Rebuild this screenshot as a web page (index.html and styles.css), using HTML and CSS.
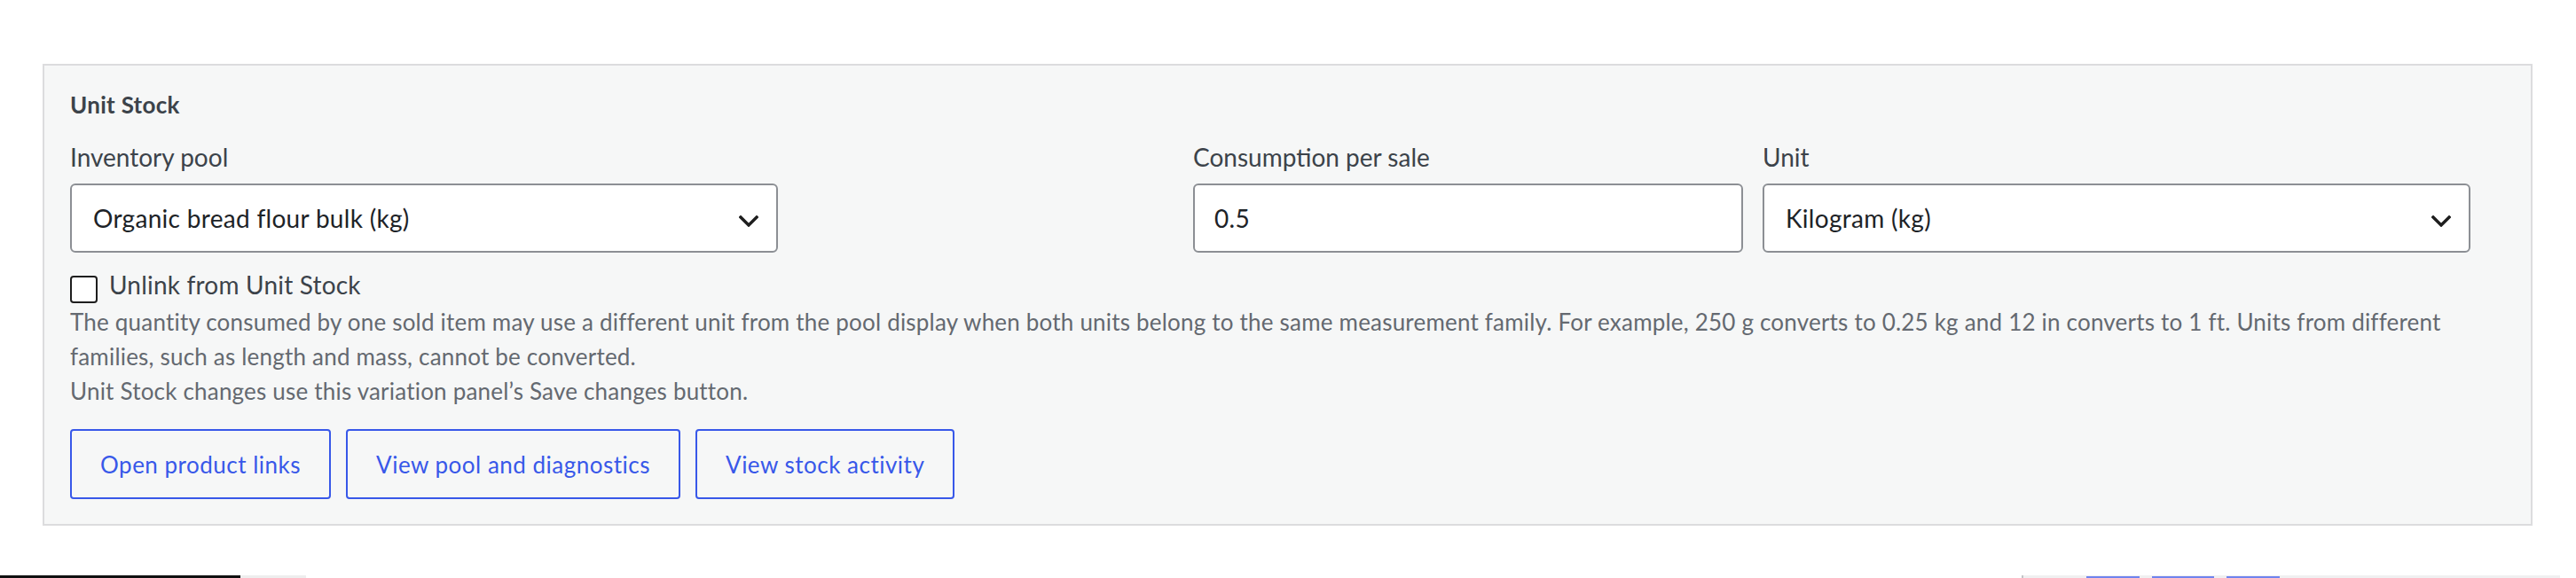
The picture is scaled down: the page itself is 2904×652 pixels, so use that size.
FILE: index.html
```html
<!DOCTYPE html>
<html lang="en">
<head>
<meta charset="utf-8">
<title>Unit Stock</title>
<link rel="stylesheet" href="styles.css">
</head>
<body>
<div class="page">
  <section class="panel">
    <h3 class="panel-title">Unit Stock</h3>
    <div class="fields">
      <div class="field field-pool">
        <label class="field-label" for="pool">Inventory pool</label>
        <div class="select-wrap">
          <select id="pool" class="control select">
            <option>Organic bread flour bulk (kg)</option>
          </select>
          <svg class="chevron" width="22" height="13" viewBox="0 0 22 13" aria-hidden="true"><path d="M2 2 L11 11 L20 2" fill="none" stroke="#1e1e1e" stroke-width="3.4" stroke-linecap="square"/></svg>
        </div>
      </div>
      <div class="field field-qty">
        <label class="field-label" for="qty">Consumption per sale</label>
        <input id="qty" class="control input" type="text" value="0.5">
      </div>
      <div class="field field-unit">
        <label class="field-label" for="unit">Unit</label>
        <div class="select-wrap">
          <select id="unit" class="control select">
            <option>Kilogram (kg)</option>
          </select>
          <svg class="chevron" width="22" height="13" viewBox="0 0 22 13" aria-hidden="true"><path d="M2 2 L11 11 L20 2" fill="none" stroke="#1e1e1e" stroke-width="3.4" stroke-linecap="square"/></svg>
        </div>
      </div>
    </div>
    <label class="check-row">
      <input type="checkbox" class="check">
      <span class="check-label">Unlink from Unit Stock</span>
    </label>
    <p class="desc">The quantity consumed by one sold item may use a different unit from the pool display when both units belong to the same measurement family. For example, 250 g converts to 0.25 kg and 12 in converts to 1 ft. Units from different families, such as length and mass, cannot be converted.</p>
    <p class="desc">Unit Stock changes use this variation panel’s Save changes button.</p>
    <div class="actions">
      <button class="btn" type="button">Open product links</button>
      <button class="btn" type="button">View pool and diagnostics</button>
      <button class="btn" type="button">View stock activity</button>
    </div>
  </section>
  <div class="next-strip">
    <div class="strip-left">
      <span class="strip-dark"></span>
      <span class="strip-light"></span>
    </div>
    <div class="strip-right">
      <span class="strip-mark strip-mark-a"></span>
      <span class="strip-mark strip-mark-b"></span>
      <span class="strip-mark strip-mark-c"></span>
    </div>
  </div>
</div>
</body>
</html>
```

FILE: styles.css
```css
* { box-sizing: border-box; }

html, body {
  margin: 0;
  padding: 0;
  background: #ffffff;
}

body {
  font-family: "Lato", "Noto Sans", sans-serif;
  color: #3c434a;
  overflow: hidden;
}

.page {
  padding: 72px 0 0 48px;
}

.panel {
  width: 2807px;
  background: #f6f7f7;
  border: 2px solid #dcdcde;
  padding: 26px 29px 28px 29px;
}

.panel-title {
  margin: 0 0 21px 0;
  font-size: 26px;
  line-height: 36px;
  font-weight: 700;
  letter-spacing: 0.3px;
  color: #3c434a;
}

.fields {
  display: flex;
  gap: 22px;
  max-width: 2706px;
}

.field {
  display: flex;
  flex-direction: column;
}

.field-pool { width: 798px; margin-right: auto; }
.field-qty { width: 620px; }
.field-unit { width: 798px; }

.field-label {
  font-size: 28px;
  line-height: 40px;
  margin-bottom: 10px;
  color: #3c434a;
}

.select-wrap {
  position: relative;
}

.control {
  display: block;
  width: 100%;
  height: 78px;
  margin: 0;
  background: #ffffff;
  border: 2px solid #8c8f94;
  border-radius: 6px;
  font-family: "Lato", "Noto Sans", sans-serif;
  font-size: 28px;
  letter-spacing: 0.3px;
  color: #1d2327;
  outline: none;
}

.select {
  -webkit-appearance: none;
  appearance: none;
  padding: 0 64px 0 24px;
}

.input {
  padding: 0 22px;
}

.chevron {
  position: absolute;
  right: 22px;
  top: 36px;
  pointer-events: none;
}

.check-row {
  display: flex;
  align-items: flex-start;
  gap: 13px;
  margin-top: 20px;
}

.check {
  -webkit-appearance: none;
  appearance: none;
  width: 31px;
  height: 31px;
  margin: 6px 0 0 0;
  background: #ffffff;
  border: 2px solid #1e1e1e;
  border-radius: 4px;
  flex: none;
}

.check-label {
  font-size: 28px;
  line-height: 32px;
  letter-spacing: 0.2px;
  color: #3c434a;
}

.desc {
  margin: 0;
  font-size: 26px;
  line-height: 39px;
  letter-spacing: 0.2px;
  color: #646970;
  max-width: 2706px;
}

.check-row + .desc {
  margin-top: 2px;
}

.actions {
  display: flex;
  gap: 17px;
  margin-top: 23px;
}

.btn {
  height: 79px;
  padding: 0 32px;
  background: transparent;
  border: 2px solid #3858e9;
  border-radius: 4px;
  color: #3858e9;
  font-family: "Lato", "Noto Sans", sans-serif;
  font-size: 26px;
  letter-spacing: 0.5px;
  cursor: pointer;
}

.next-strip {
  display: flex;
  justify-content: space-between;
  height: 3px;
  margin: 56px 0 0 -48px;
  padding-right: 18px;
  overflow: hidden;
}

.strip-left {
  display: flex;
}

.strip-dark {
  width: 271px;
  height: 3px;
  background: #101010;
}

.strip-light {
  width: 74px;
  height: 3px;
  background: #eeeeee;
}

.strip-right {
  display: flex;
  gap: 14px;
  width: 607px;
  height: 3px;
  background: #f0f0f1;
  border-left: 2px solid #c3c4c7;
  padding-left: 71px;
}

.strip-mark {
  height: 2px;
  margin-top: 1px;
  background: #6f84ee;
}

.strip-mark-a { width: 60px; }
.strip-mark-b { width: 70px; }
.strip-mark-c { width: 60px; }
```
